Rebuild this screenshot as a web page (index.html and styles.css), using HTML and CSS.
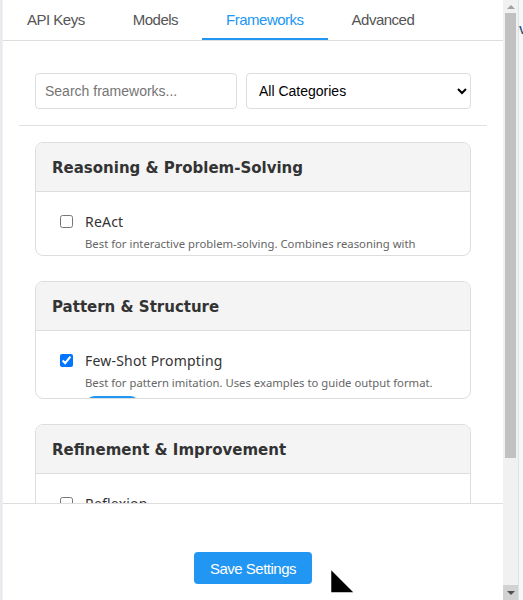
FILE: index.html
```html
<!DOCTYPE html>
<html>
<head>
<meta charset="utf-8">
<link rel="stylesheet" href="styles.css">
</head>
<body>
<div class="screen">
  <div class="bg-left"></div>
  <div class="popup">
    <nav class="tabs">
      <div class="tab">API Keys</div>
      <div class="tab">Models</div>
      <div class="tab active">Frameworks</div>
      <div class="tab">Advanced</div>
    </nav>
    <main class="content">
      <div class="section">
        <div class="filters">
          <input class="search" type="text" placeholder="Search frameworks...">
          <select class="category">
            <option>All Categories</option>
          </select>
        </div>
      </div>
      <hr class="divider">
      <div class="section cards">
        <div class="card card-short">
          <div class="card-header">Reasoning &amp; Problem-Solving</div>
          <div class="card-body">
            <label class="item">
              <input type="checkbox" class="check">
              <span class="item-text">
                <span class="item-name">ReAct</span>
                <span class="item-desc">Best for interactive problem-solving. Combines reasoning with acting in an iterative loop.</span>
              </span>
            </label>
          </div>
        </div>
        <div class="card card-tall">
          <div class="card-header">Pattern &amp; Structure</div>
          <div class="card-body">
            <label class="item">
              <input type="checkbox" class="check" checked>
              <span class="item-text">
                <span class="item-name">Few-Shot Prompting</span>
                <span class="item-desc">Best for pattern imitation. Uses examples to guide output format.</span>
                <span class="pill">Selected</span>
              </span>
            </label>
          </div>
        </div>
        <div class="card">
          <div class="card-header">Refinement &amp; Improvement</div>
          <div class="card-body">
            <label class="item">
              <input type="checkbox" class="check">
              <span class="item-text">
                <span class="item-name">Reflexion</span>
                <span class="item-desc">Best for iterative self-improvement of answers.</span>
              </span>
            </label>
          </div>
        </div>
      </div>
    </main>
    <footer class="footer">
      <button class="save">Save Settings</button>
    </footer>
  </div>
  <div class="scrollbar">
    <div class="sb-up"><span class="tri-up"></span></div>
    <div class="sb-track"><div class="sb-thumb"></div></div>
    <div class="sb-down"><span class="tri-down"></span></div>
  </div>
  <div class="bg-right"><span class="bg-glyph">V</span></div>
  <svg class="cursor" width="28" height="28" viewBox="0 0 28 28">
    <polygon points="1.5,1.5 1.5,26 26,26" fill="#000" stroke="#fff" stroke-width="1.5"/>
  </svg>
</div>
</body>
</html>
```
FILE: styles.css
```css
* { box-sizing: border-box; }
html, body { margin: 0; padding: 0; }
body {
  width: 523px;
  height: 600px;
  overflow: hidden;
  background: #fff;
  font-family: "Liberation Sans", Arial, sans-serif;
}
.screen {
  position: relative;
  display: flex;
  width: 523px;
  height: 600px;
}
.bg-left {
  width: 3px;
  background: #e8ebee;
  border-right: 1px solid #eef0f2;
}
.popup {
  width: 500px;
  height: 600px;
  display: flex;
  flex-direction: column;
  background: #fff;
}
.tabs {
  display: flex;
  height: 41px;
  border-bottom: 1px solid #dddddd;
}
.tab {
  padding: 0 24px;
  height: 40px;
  line-height: 40px;
  font-size: 15px;
  letter-spacing: -0.5px;
  color: #555;
  white-space: nowrap;
}
.tab.active {
  color: #2196f3;
  border-bottom: 2px solid #2196f3;
  height: 40px;
}
.content {
  flex: 1;
  overflow: hidden;
  padding: 16px 16px 0;
}
.section {
  padding: 16px 16px 0;
}
.filters {
  display: flex;
  gap: 9px;
}
.search {
  flex: 0 0 202px;
  height: 36px;
  border: 1px solid #dddddd;
  border-radius: 4px;
  padding: 0 9px;
  font-family: "Liberation Sans", Arial, sans-serif;
  font-size: 14px;
  color: #333;
}
.search::placeholder { color: #757575; }
.category {
  flex: 1;
  height: 36px;
  border: 1px solid #dddddd;
  border-radius: 4px;
  padding: 0 8px;
  background: #fff;
  font-family: "Liberation Sans", Arial, sans-serif;
  font-size: 14px;
  color: #000;
}
.divider {
  margin: 16px 0 0;
  border: 0;
  border-top: 1px solid #e0e0e0;
  height: 0;
}
.cards {
  display: flex;
  flex-direction: column;
  gap: 25px;
}
.card {
  flex: none;
  border: 1px solid #dddddd;
  border-radius: 8px;
  overflow: hidden;
  background: #fff;
  font-family: "Noto Sans", "Open Sans", sans-serif;
}
.card-short { height: 114px; }
.card-tall { height: 118px; }
.card-header {
  height: 49px;
  background: #f4f4f4;
  border-bottom: 1px solid #dddddd;
  padding: 0 16px;
  line-height: 50px;
  font-family: "DejaVu Sans", sans-serif;
  font-size: 15px;
  font-weight: 700;
  color: #333;
  white-space: nowrap;
  overflow: hidden;
}
.card-body {
  padding: 20px 16px 16px 24px;
}
.item {
  display: flex;
  align-items: flex-start;
  gap: 12px;
}
.check {
  margin: 3px 0 0;
  width: 13px;
  height: 13px;
  flex: none;
}
.item-text {
  display: flex;
  flex-direction: column;
  max-width: 352px;
}
.item-name {
  font-size: 14px;
  letter-spacing: 0.2px;
  line-height: 20px;
  color: #333;
}
.item-desc {
  margin-top: 3px;
  font-size: 11.3px;
  line-height: 18px;
  color: #666;
}
.pill {
  display: block;
  margin-top: 4px;
  width: 55px;
  height: 20px;
  border-radius: 10px;
  background: #2196f3;
  color: #fff;
  font-size: 11px;
  line-height: 20px;
  text-align: center;
}
.footer {
  height: 97px;
  flex: none;
  border-top: 1px solid #dddddd;
  display: flex;
  justify-content: center;
  align-items: flex-start;
  padding-top: 48px;
  background: #fff;
}
.save {
  height: 32px;
  padding: 0 16px;
  border: 0;
  border-radius: 4px;
  background: #2196f3;
  color: #fff;
  font-family: "Liberation Sans", Arial, sans-serif;
  font-size: 15px;
  letter-spacing: -0.5px;
}
.scrollbar {
  width: 15px;
  height: 600px;
  display: flex;
  flex-direction: column;
  background: #f1f1f1;
}
.sb-up, .sb-down {
  height: 13px;
  display: flex;
  align-items: center;
  justify-content: center;
}
.sb-down {
  height: 15px;
  background: #d2d2d2;
}
.tri-up {
  width: 0; height: 0;
  border-left: 4px solid transparent;
  border-right: 4px solid transparent;
  border-bottom: 4px solid #a3a3a3;
}
.tri-down {
  width: 0; height: 0;
  border-left: 4px solid transparent;
  border-right: 4px solid transparent;
  border-top: 4px solid #505050;
}
.sb-track {
  flex: 1;
  padding: 0 2px;
}
.sb-thumb {
  height: 445px;
  background: #c1c1c1;
}
.bg-right {
  width: 5px;
  background: #f5f7f9;
  border-left: 1px solid #d9e2ec;
  overflow: hidden;
  font-family: "Liberation Sans", Arial, sans-serif;
  font-size: 11px;
  font-weight: 700;
  color: #2a4f7a;
}
.bg-glyph {
  display: block;
  margin-top: 24px;
  margin-left: 0;
}
.cursor {
  position: absolute;
  left: 329px;
  top: 567px;
}
```
